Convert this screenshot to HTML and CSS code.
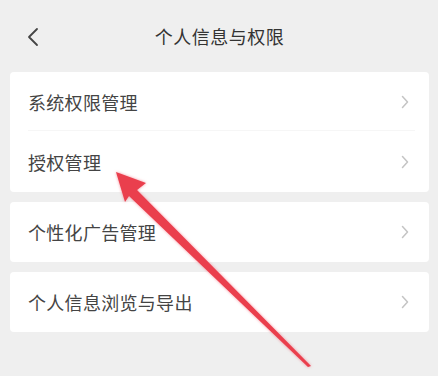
FILE: index.html
```html
<!DOCTYPE html>
<html lang="zh-CN">
<head>
    <meta charset="UTF-8">
    <meta name="viewport" content="width=device-width, initial-scale=1.0">
    <title>个人信息与权限</title>
    <link rel="stylesheet" href="styles.css">
</head>
<body>
    <div class="page">
        <div class="topbar">
            <svg class="back" width="12" height="20" viewBox="0 0 12 20">
                <path d="M10 2 L2 10 L10 18" fill="none" stroke="#444" stroke-width="1.8" stroke-linecap="round" stroke-linejoin="round"/>
            </svg>
            <div class="title">个人信息与权限</div>
        </div>

        <div class="group">
            <div class="row">
                <span>系统权限管理</span>
                <svg class="arrow-r" width="8" height="14" viewBox="0 0 8 14"><path d="M1.5 1.5 L6.5 7 L1.5 12.5" fill="none" stroke="#c4c4c4" stroke-width="1.5" stroke-linecap="round" stroke-linejoin="round"/></svg>
            </div>
            <div class="row">
                <span>授权管理</span>
                <svg class="arrow-r" width="8" height="14" viewBox="0 0 8 14"><path d="M1.5 1.5 L6.5 7 L1.5 12.5" fill="none" stroke="#c4c4c4" stroke-width="1.5" stroke-linecap="round" stroke-linejoin="round"/></svg>
            </div>
        </div>

        <div class="group">
            <div class="row">
                <span>个性化广告管理</span>
                <svg class="arrow-r" width="8" height="14" viewBox="0 0 8 14"><path d="M1.5 1.5 L6.5 7 L1.5 12.5" fill="none" stroke="#c4c4c4" stroke-width="1.5" stroke-linecap="round" stroke-linejoin="round"/></svg>
            </div>
        </div>

        <div class="group">
            <div class="row">
                <span>个人信息浏览与导出</span>
                <svg class="arrow-r" width="8" height="14" viewBox="0 0 8 14"><path d="M1.5 1.5 L6.5 7 L1.5 12.5" fill="none" stroke="#c4c4c4" stroke-width="1.5" stroke-linecap="round" stroke-linejoin="round"/></svg>
            </div>
        </div>

        <!-- red pointer drawn over the list -->
        <svg class="pointer" width="438" height="376" viewBox="0 0 438 376">
            <polygon points="116,172 146,183 137,190 311,366 308,367 129,196 125,202" fill="#ea3f4d"/>
        </svg>
    </div>
</body>
</html>
```

FILE: styles.css
```css
html, body { margin: 0; padding: 0; }
body { background: #efefef; font-family: "Noto Sans CJK SC", "Noto Sans", sans-serif; color: #444; }
.page { position: relative; width: 438px; height: 376px; overflow: hidden; padding: 0 9px 0 10px; box-sizing: border-box; }

.topbar { height: 72px; display: flex; align-items: center; justify-content: center; position: relative; }
.topbar .back { position: absolute; left: 17px; top: 27px; }
.title { font-size: 18px; color: #333; letter-spacing: 0.5px; margin-top: -1px; }

.group { background: #fff; border-radius: 4px; margin-bottom: 10px; }
.row { height: 60px; display: flex; align-items: center; justify-content: space-between; padding: 0 20px 0 18px; font-size: 18px; letter-spacing: 0.3px; position: relative; }
.row + .row::before { content: ""; position: absolute; top: -2px; left: 18px; right: 14px; height: 1px; background: #f6f6f6; }
.group:first-of-type .row:last-child { height: 59px; }

.pointer { position: absolute; left: 0; top: 0; filter: drop-shadow(0 0 1.5px rgba(240, 80, 100, 0.6)); }
```
